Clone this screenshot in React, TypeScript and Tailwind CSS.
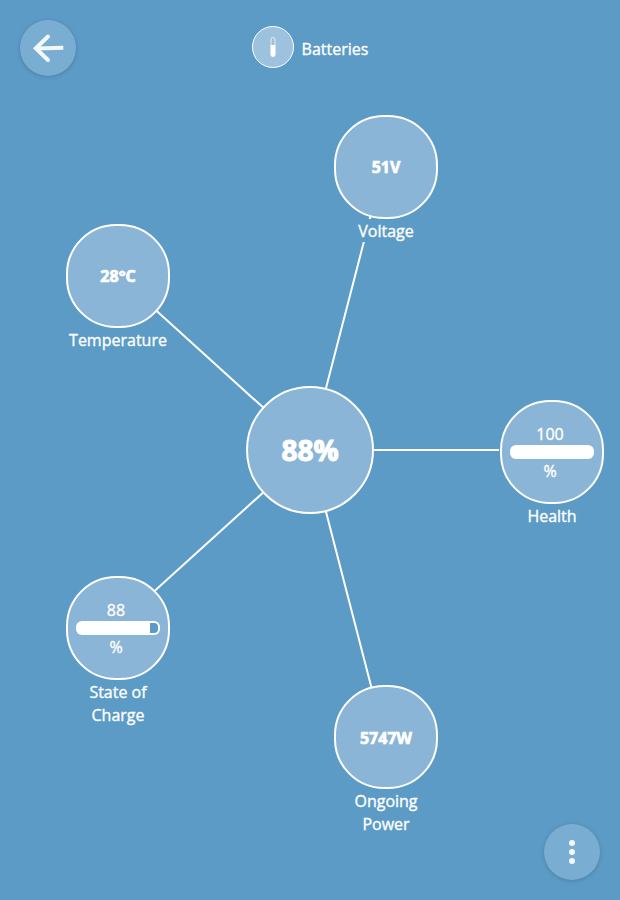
import type { ReactNode } from "react";

function Node({ place, label, children }: { place: string; label: string; children: ReactNode }) {
  return (
    <div className={`absolute flex w-[104px] flex-col items-center ${place}`}>
      <div className="flex h-[104px] w-[104px] flex-col items-center justify-center rounded-[50px] border-2 border-white bg-[#8ab5d7]">
        {children}
      </div>
      <div className="bg-[#5c9bc6] text-center text-[16px] leading-[23px]">
        <span className="block translate-y-px">{label}</span>
      </div>
    </div>
  );
}

function Value({ children }: { children: ReactNode }) {
  return <span className="text-[16px] leading-[23px] font-bold [-webkit-text-stroke:0.7px_white]">{children}</span>;
}

function Meter({ value }: { value: number }) {
  return (
    <div className="flex w-[84px] flex-col items-center">
      <span className="mr-1 h-[23px] translate-y-px text-[16px] leading-[23px]">{value}</span>
      <div className="flex h-[14px] w-[84px] justify-end rounded-[6px] bg-white p-[2px]">
        {value < 100 && (
          <div className="rounded-r-[4px] bg-[#5c9bc6]" style={{ width: Math.round(84 * (1 - value / 100)) - 2 }} />
        )}
      </div>
      <span className="mr-1 h-[23px] translate-y-px text-[16px] leading-[23px]">%</span>
    </div>
  );
}

export default function App() {
  return (
    <main className="relative h-[900px] w-[620px] overflow-hidden bg-[#5c9bc6] font-['Open_Sans',sans-serif] text-white [-webkit-text-stroke:0.35px_white]">
      <header className="flex h-[94px] items-start justify-center pt-[26px]">
        <div className="flex items-center gap-2">
          <div className="flex h-[42px] w-[42px] items-center justify-center rounded-full border border-white bg-[#9dc2dd]">
            <svg width="8" height="22" viewBox="0 0 8 22">
              <rect x="2" y="1.5" width="4" height="19" rx="2" fill="none" stroke="#fff" strokeOpacity=".7" />
              <path d="M1.7 9h4.6v9.5a2.3 2.3 0 0 1-4.6 0z" fill="#fff" />
            </svg>
          </div>
          <h1 className="mt-1 text-[16px] leading-[23px]">Batteries</h1>
        </div>
      </header>
      <button className="absolute top-5 left-5 flex h-14 w-14 items-center justify-center rounded-full bg-[#7aadd2] shadow-[0_1px_4px_rgba(0,0,0,0.18)]">
        <svg width="36" height="36" viewBox="0 0 36 36" fill="none" stroke="#f3f8fc" strokeWidth="4">
          <path d="M18 6.5 5.8 18.2 18 30" strokeLinecap="round" />
          <path d="m6 18.4 27.3-.6" />
        </svg>
      </button>

      <svg className="absolute inset-0" width="620" height="900" stroke="#fff" strokeWidth="2">
        <path d="M310 450 377 191M310 450H499M310 450 377 709M310 450 133 289.5M310 450 133 610.5" />
      </svg>
      <Node place="left-[334px] top-[115px]" label="Voltage"><Value>51V</Value></Node>
      <Node place="left-[66px] top-[224px]" label="Temperature"><Value>28°C</Value></Node>
      <Node place="left-[500px] top-[400px]" label="Health"><Meter value={100} /></Node>
      <Node place="left-[66px] top-[576px]" label="State of Charge"><Meter value={88} /></Node>
      <Node place="left-[334px] top-[685px]" label="Ongoing Power">
        <div className="pt-0.5"><Value>5747W</Value></div>
      </Node>
      <div className="absolute top-[386px] left-[246px] flex h-32 w-32 items-center justify-center rounded-full border-2 border-white bg-[#8ab5d7] text-[28px] font-bold [-webkit-text-stroke:1.1px_white]">
        88%
      </div>

      <button className="absolute right-5 bottom-5 flex h-14 w-14 flex-col items-center justify-center gap-[3px] rounded-full bg-[#7aadd2] shadow-[0_1px_4px_rgba(0,0,0,0.18)]">
        <i className="h-1.5 w-1.5 rounded-full bg-[#f3f8fc]" />
        <i className="h-1.5 w-1.5 rounded-full bg-[#f3f8fc]" />
        <i className="h-1.5 w-1.5 rounded-full bg-[#f3f8fc]" />
      </button>
    </main>
  );
}
